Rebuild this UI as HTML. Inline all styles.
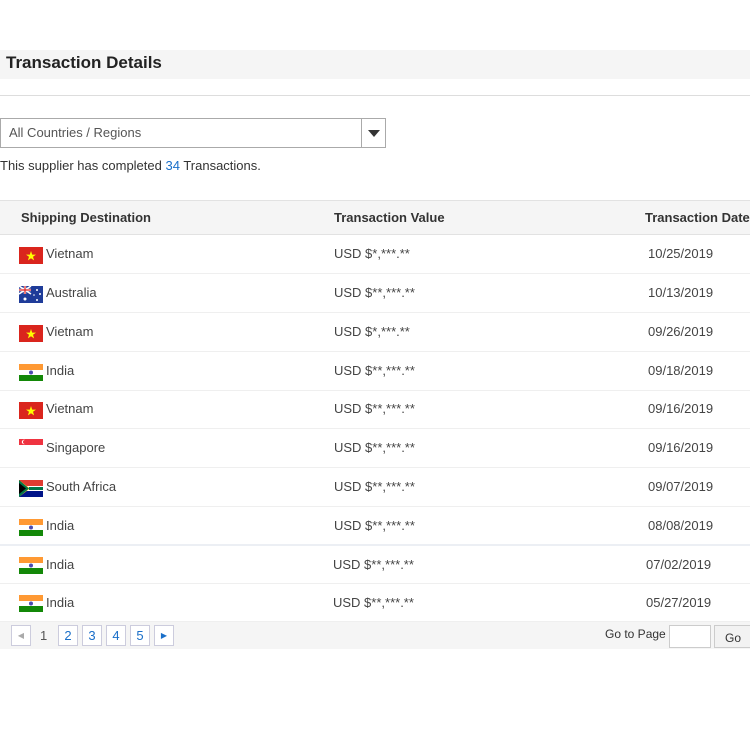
<!DOCTYPE html>
<html><head><meta charset="utf-8"><style>
*{margin:0;padding:0;box-sizing:border-box}
body{width:750px;height:750px;background:#fff;font-family:"Liberation Sans",Arial,sans-serif;color:#333;position:relative;overflow:hidden;font-size:13px}
.a{position:absolute;white-space:nowrap}
.title{left:0;top:50px;width:750px;height:29px;background:#f5f5f5;font-weight:bold;font-size:17px;color:#222;padding:3px 0 0 6px}
.hr{left:0;top:95px;width:750px;height:1px;background:#ddd}
.sel{left:0;top:118px;width:386px;height:30px;border:1px solid #aaa;font-size:13px;color:#555;padding:6px 0 0 8px}
.sel .btn{position:absolute;right:0;top:0;width:24px;height:28px;border-left:1px solid #aaa}
.sel .btn:after{content:"";position:absolute;left:6px;top:11px;border-left:6px solid transparent;border-right:6px solid transparent;border-top:7px solid #333}
.thead{left:0;top:200px;width:750px;height:35px;background:#f5f5f5;border-top:1px solid #e2e2e2;border-bottom:1px solid #e2e2e2;font-weight:bold;font-size:13px;color:#333}
.row{left:0;width:750px;height:39px;border-bottom:1px solid #efefef;font-size:13px;color:#444}
.row svg{position:absolute;left:19px;top:12px}
.c1{position:absolute;left:46px;top:11px}
.c2{position:absolute;left:334px;top:11px}
.c3{position:absolute;left:648px;top:11px}
.pg{left:0;top:622px;width:750px;height:27px;background:#f5f5f5}
.pb{position:absolute;top:3px;width:20px;height:21px;border:1px solid #ccd;background:#fff;color:#1a6fc9;font-size:13px;text-align:center;line-height:19px}
</style></head><body>
<div class="a title">Transaction Details</div>
<div class="a hr"></div>
<div class="a sel">All Countries / Regions<div class="btn"></div></div>
<div class="a" style="left:0;top:158px;font-size:13px;color:#333">This supplier has completed <span style="color:#1a6fc9">34</span> Transactions.</div>
<div class="a thead"><span class="a" style="left:21px;top:9px">Shipping Destination</span><span class="a" style="left:334px;top:9px">Transaction Value</span><span class="a" style="left:645px;top:9px">Transaction Date</span></div>

<div class="a row" style="top:235px"><svg width="24" height="17"><rect width="24" height="17" fill="#da251d"/><polygon points="12,4 13.2,7.6 17,7.6 14,9.8 15.1,13.4 12,11.2 8.9,13.4 10,9.8 7,7.6 10.8,7.6" fill="#ff0"/></svg><span class="c1">Vietnam</span><span class="c2">USD $*,***.**</span><span class="c3">10/25/2019</span></div>
<div class="a row" style="top:274px"><svg width="24" height="17"><rect width="24" height="17" fill="#1f3c99"/><path d="M0 0L12 8M12 0L0 8" stroke="#fff" stroke-width="1.6"/><path d="M6 0V8M0 4H12" stroke="#fff" stroke-width="2.4"/><path d="M6 0V8M0 4H12" stroke="#d22" stroke-width="1.2"/><circle cx="6" cy="13" r="1.5" fill="#fff"/><circle cx="18" cy="4" r="1" fill="#fff"/><circle cx="21" cy="8" r="1" fill="#fff"/><circle cx="18" cy="14" r="1" fill="#fff"/><circle cx="15" cy="9" r="0.8" fill="#fff"/></svg><span class="c1">Australia</span><span class="c2">USD $**,***.**</span><span class="c3">10/13/2019</span></div>
<div class="a row" style="top:313px"><svg width="24" height="17"><rect width="24" height="17" fill="#da251d"/><polygon points="12,4 13.2,7.6 17,7.6 14,9.8 15.1,13.4 12,11.2 8.9,13.4 10,9.8 7,7.6 10.8,7.6" fill="#ff0"/></svg><span class="c1">Vietnam</span><span class="c2">USD $*,***.**</span><span class="c3">09/26/2019</span></div>
<div class="a row" style="top:352px"><svg width="24" height="17"><rect width="24" height="6" fill="#f93"/><rect y="6" width="24" height="5" fill="#fff"/><rect y="11" width="24" height="6" fill="#138808"/><circle cx="12" cy="8.5" r="2" fill="#4b4bb0"/></svg><span class="c1">India</span><span class="c2">USD $**,***.**</span><span class="c3">09/18/2019</span></div>
<div class="a row" style="top:390px"><svg width="24" height="17"><rect width="24" height="17" fill="#da251d"/><polygon points="12,4 13.2,7.6 17,7.6 14,9.8 15.1,13.4 12,11.2 8.9,13.4 10,9.8 7,7.6 10.8,7.6" fill="#ff0"/></svg><span class="c1">Vietnam</span><span class="c2">USD $**,***.**</span><span class="c3">09/16/2019</span></div>
<div class="a row" style="top:429px"><svg width="24" height="17" style="top:10px"><rect width="24" height="6" fill="#ef3340"/><rect y="6" width="24" height="6" fill="#fff"/><circle cx="5" cy="3" r="2.2" fill="#fff"/><circle cx="6" cy="3" r="2" fill="#ef3340"/></svg><span class="c1">Singapore</span><span class="c2">USD $**,***.**</span><span class="c3">09/16/2019</span></div>
<div class="a row" style="top:468px"><svg width="24" height="17"><rect width="24" height="17" fill="#fff"/><rect width="24" height="6" fill="#e03c31"/><rect y="11" width="24" height="6" fill="#001489"/><path d="M0 0L11 8.5L0 17" fill="#ffb81c"/><path d="M0 0L10 8.5L0 17Z M10 7H24V10H10Z" fill="#007749"/><path d="M0 3L7 8.5L0 14Z" fill="#000"/></svg><span class="c1">South Africa</span><span class="c2">USD $**,***.**</span><span class="c3">09/07/2019</span></div>
<div class="a row" style="top:507px;border-bottom:2px solid #eceff4"><svg width="24" height="17"><rect width="24" height="6" fill="#f93"/><rect y="6" width="24" height="5" fill="#fff"/><rect y="11" width="24" height="6" fill="#138808"/><circle cx="12" cy="8.5" r="2" fill="#4b4bb0"/></svg><span class="c1">India</span><span class="c2">USD $**,***.**</span><span class="c3">08/08/2019</span></div>
<div class="a row" style="top:546px;height:38px"><svg width="24" height="17" style="top:11px"><rect width="24" height="6" fill="#f93"/><rect y="6" width="24" height="5" fill="#fff"/><rect y="11" width="24" height="6" fill="#138808"/><circle cx="12" cy="8.5" r="2" fill="#4b4bb0"/></svg><span class="c1" style="top:11px">India</span><span class="c2" style="left:333px;top:11px">USD $**,***.**</span><span class="c3" style="left:646px;top:11px">07/02/2019</span></div>
<div class="a row" style="top:584px;height:38px"><svg width="24" height="17" style="top:11px"><rect width="24" height="6" fill="#f93"/><rect y="6" width="24" height="5" fill="#fff"/><rect y="11" width="24" height="6" fill="#138808"/><circle cx="12" cy="8.5" r="2" fill="#4b4bb0"/></svg><span class="c1" style="top:11px">India</span><span class="c2" style="left:333px;top:11px">USD $**,***.**</span><span class="c3" style="left:646px;top:11px">05/27/2019</span></div>

<div class="a pg">
<div class="pb" style="left:11px;color:#aaa;font-size:8px">&#9664;</div>
<span class="a" style="left:40px;top:6px;color:#555">1</span>
<div class="pb" style="left:58px">2</div>
<div class="pb" style="left:82px">3</div>
<div class="pb" style="left:106px">4</div>
<div class="pb" style="left:130px">5</div>
<div class="pb" style="left:154px;font-size:8px">&#9654;</div>
<span class="a" style="left:605px;top:5px;font-size:12px;color:#333">Go to Page</span>
<div class="a" style="left:669px;top:3px;width:42px;height:23px;border:1px solid #ccc;background:#fff"></div>
<div class="a" style="left:714px;top:3px;width:40px;height:23px;border:1px solid #ccc;background:#f2f2f2;font-size:12px;padding:5px 0 0 10px">Go</div>
</div>
</body></html>
